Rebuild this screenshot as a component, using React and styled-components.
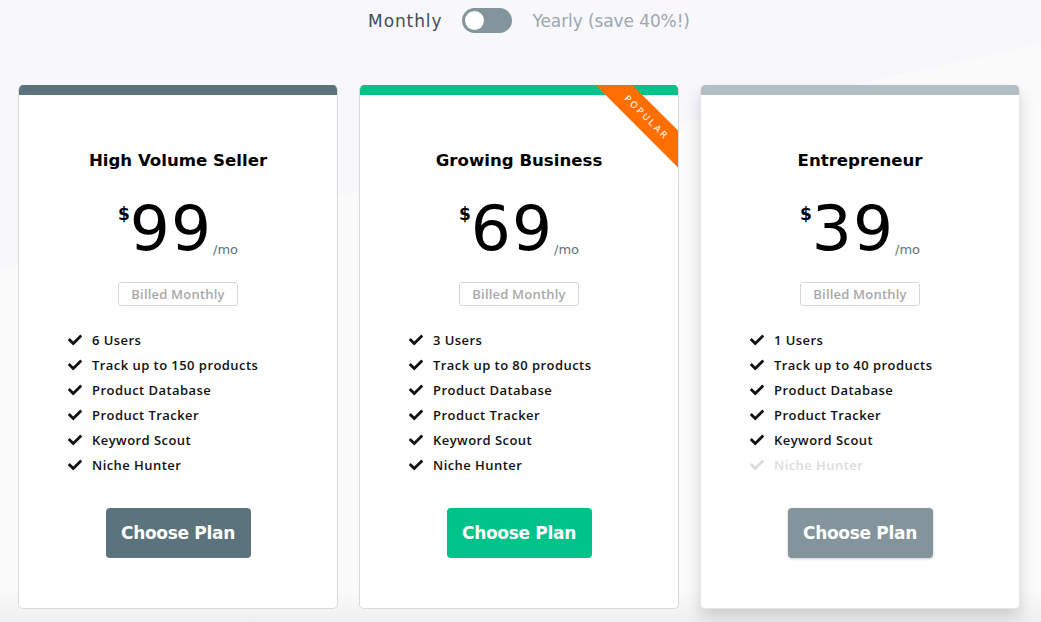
import React from "react";
import styled, { createGlobalStyle } from "styled-components";
import { FaCheck } from "react-icons/fa";

const Global = createGlobalStyle`
  html, body { margin: 0; padding: 0; }
  body {
    font-family: "DejaVu Sans", sans-serif;
    background: #f8f8fc;
  }
`;

const Page = styled.div`
  min-height: 622px;
  box-sizing: border-box;
  background:
    linear-gradient(to bottom, rgba(238,238,240,0) 590px, #efeff1 622px),
    linear-gradient(167.8deg, #f8f8fc 263px, #fbfbfc 263px);
  padding-top: 8px;
  overflow: hidden;
`;

const ToggleRow = styled.div`
  display: flex;
  justify-content: center;
  align-items: center;
  gap: 20px;
  height: 25px;
  margin-left: 17px;
`;

const ToggleLabel = styled.span`
  font-size: 17px;
  color: ${(p) => (p.$active ? "#444c55" : "#9aa7ad")};
  letter-spacing: ${(p) => (p.$active ? "0.9px" : "-0.1px")};
`;

const Switch = styled.div`
  width: 50px;
  height: 25px;
  border-radius: 13px;
  background: #84949c;
  position: relative;
  box-sizing: border-box;
  &::after {
    content: "";
    position: absolute;
    left: 3px;
    top: 3px;
    width: 19px;
    height: 19px;
    border-radius: 50%;
    background: #fff;
  }
`;

const Cards = styled.div`
  display: flex;
  gap: 21px;
  padding: 52px 0 0 18px;
`;

const Card = styled.div`
  position: relative;
  width: 320px;
  height: 524px;
  box-sizing: border-box;
  background: #fff;
  border: 1px solid ${(p) => (p.$raised ? "#e6e6e6" : "#d9d9d9")};
  border-top: none;
  border-radius: 5px;
  overflow: hidden;
  box-shadow: ${(p) =>
    p.$raised ? "0 8px 16px rgba(0,0,0,0.16)" : "none"};
  display: flex;
  flex-direction: column;
  align-items: center;
`;

const TopBar = styled.div`
  align-self: stretch;
  margin: 0 -1px;
  height: 10px;
  background: ${(p) => p.$color};
  flex-shrink: 0;
`;

const Ribbon = styled.div`
  position: absolute;
  top: 19px;
  right: -33px;
  width: 130px;
  height: 26px;
  background: #ff6f00;
  transform: rotate(45deg);
  display: flex;
  align-items: center;
  justify-content: center;
  color: #fff;
  font-size: 9px;
  letter-spacing: 2.4px;
  padding-left: 2px;
  box-sizing: border-box;
  font-family: "DejaVu Sans", sans-serif;
`;

const Title = styled.h2`
  margin: 55px 0 0;
  font-size: 16.6px;
  line-height: 22px;
  font-weight: bold;
  color: #000;
`;

const PriceRow = styled.div`
  margin-top: 25px;
  display: flex;
  align-items: flex-end;
  height: 60px;
  margin-left: 0px;
`;

const Currency = styled.span`
  align-self: flex-start;
  font-size: 17px;
  font-weight: bold;
  margin-top: 7px;
  color: #000;
`;

const Amount = styled.span`
  font-size: 63px;
  line-height: 56px;
  color: #000;
  letter-spacing: 1px;
`;

const Per = styled.span`
  font-size: 13px;
  color: #5a737d;
  margin-left: 1px;
`;

const Billed = styled.div`
  margin-top: 25px;
  width: 120px;
  height: 24px;
  box-sizing: border-box;
  border: 1px solid #d6d6d6;
  border-radius: 3px;
  display: flex;
  align-items: center;
  justify-content: center;
  font-family: "Open Sans", sans-serif;
  font-weight: 600;
  font-size: 13px;
  letter-spacing: 0.2px;
  color: #a9a9a9;
`;

const Features = styled.ul`
  list-style: none;
  margin: 21px 0 0;
  padding: 0 0 0 49px;
  align-self: stretch;
  display: flex;
  flex-direction: column;
`;

const Feature = styled.li`
  height: 25px;
  display: flex;
  align-items: center;
  gap: 10px;
  font-family: "Open Sans", sans-serif;
  font-weight: 600;
  font-size: 13px;
  letter-spacing: 0.45px;
  color: ${(p) => (p.$off ? "#dcdcdc" : "#111")};
  svg {
    width: 14px;
    height: 14px;
    flex-shrink: 0;
    color: ${(p) => (p.$off ? "#dcdcdc" : "#111")};
  }
`;

const Button = styled.button`
  margin-top: 31px;
  width: 145px;
  height: 50px;
  border: none;
  border-radius: 4px;
  background: ${(p) => p.$color};
  color: #fff;
  font-family: "DejaVu Sans", sans-serif;
  font-weight: bold;
  font-size: 17px;
  letter-spacing: -0.3px;
  box-shadow: ${(p) => (p.$shadow ? "0 1px 3px rgba(0,0,0,0.2)" : "none")};
  cursor: pointer;
`;

const plans = [
  {
    title: "High Volume Seller",
    price: "99",
    bar: "#5a737d",
    btn: "#5a737d",
    features: ["6 Users", "Track up to 150 products", "Product Database", "Product Tracker", "Keyword Scout", "Niche Hunter"],
    off: [],
  },
  {
    title: "Growing Business",
    price: "69",
    bar: "#00c389",
    btn: "#00c389",
    popular: true,
    features: ["3 Users", "Track up to 80 products", "Product Database", "Product Tracker", "Keyword Scout", "Niche Hunter"],
    off: [],
  },
  {
    title: "Entrepreneur",
    price: "39",
    bar: "#b2bec3",
    btn: "#84949c",
    raised: true,
    features: ["1 Users", "Track up to 40 products", "Product Database", "Product Tracker", "Keyword Scout", "Niche Hunter"],
    off: [5],
  },
];

export default function App() {
  return (
    <Page>
      <Global />
      <ToggleRow>
        <ToggleLabel $active>Monthly</ToggleLabel>
        <Switch />
        <ToggleLabel>Yearly (save 40%!)</ToggleLabel>
      </ToggleRow>
      <Cards>
        {plans.map((p) => (
          <Card key={p.title} $raised={p.raised}>
            <TopBar $color={p.bar} />
            {p.popular && <Ribbon>POPULAR</Ribbon>}
            <Title>{p.title}</Title>
            <PriceRow>
              <Currency>$</Currency>
              <Amount>{p.price}</Amount>
              <Per>/mo</Per>
            </PriceRow>
            <Billed>Billed Monthly</Billed>
            <Features>
              {p.features.map((f, i) => (
                <Feature key={f} $off={p.off.includes(i)}>
                  <FaCheck />
                  {f}
                </Feature>
              ))}
            </Features>
            <Button $color={p.btn} $shadow={p.raised}>Choose Plan</Button>
          </Card>
        ))}
      </Cards>
    </Page>
  );
}
